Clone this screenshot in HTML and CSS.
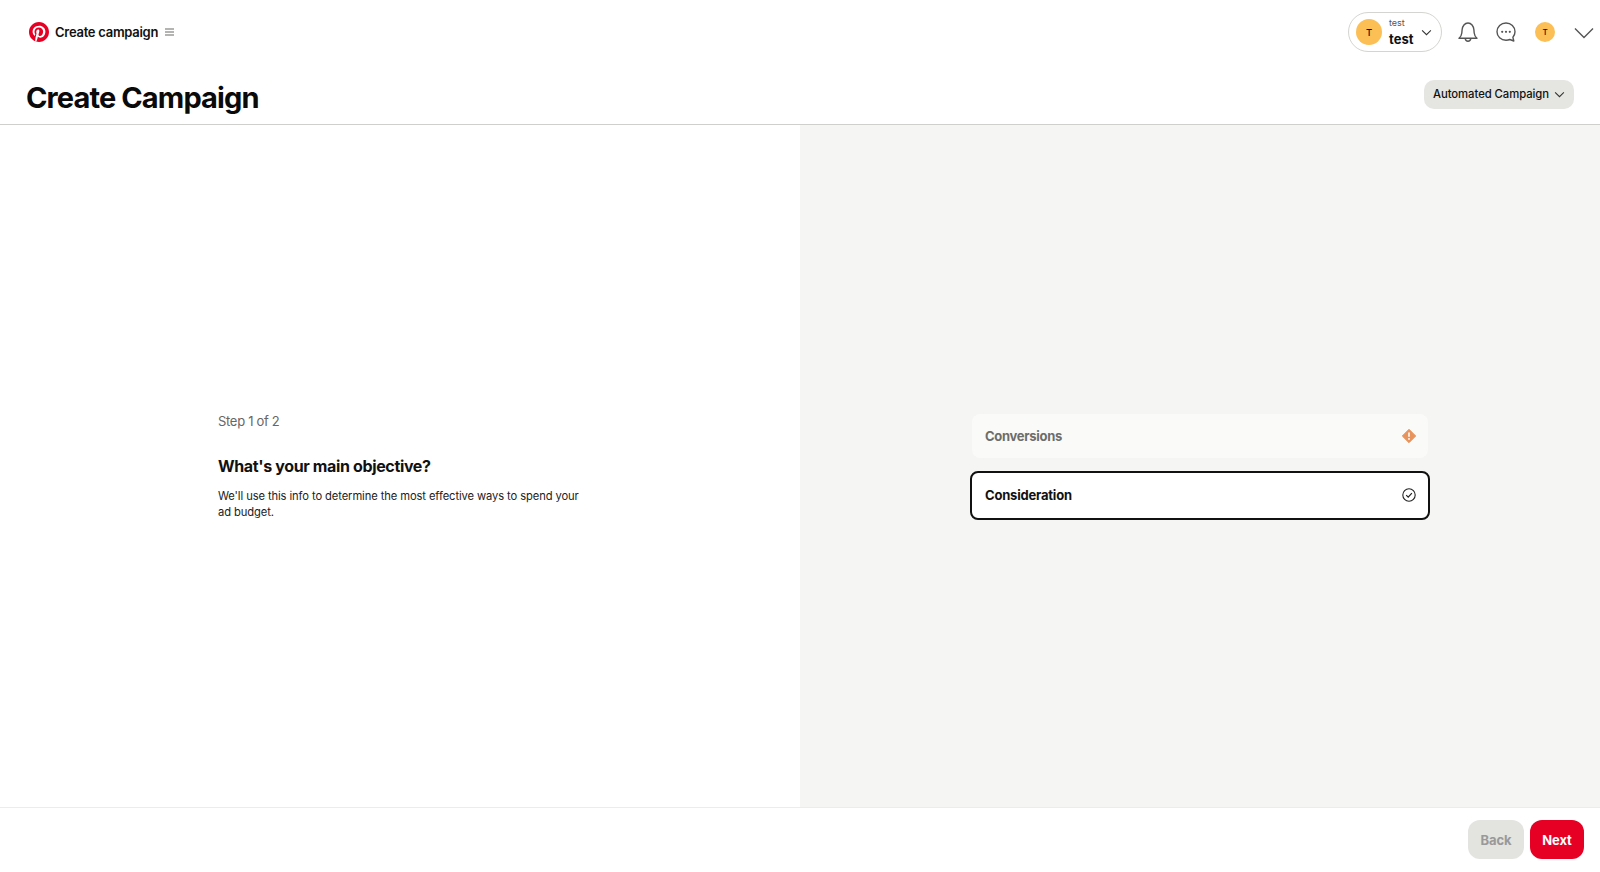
FILE: index.html
```html
<!DOCTYPE html>
<html lang="en">
<head>
<meta charset="utf-8">
<title>Create Campaign</title>
<link rel="stylesheet" href="styles.css">
</head>
<body>
<div class="page">
  <header class="topbar">
    <div class="brand">
      <svg class="logo" viewBox="0 0 24 24" width="20" height="20"><circle cx="12" cy="12" r="11" fill="#fff"/><path fill="#e60023" d="M12 0C5.373 0 0 5.372 0 12c0 5.084 3.163 9.426 7.627 11.174-.105-.949-.2-2.405.042-3.441.218-.937 1.407-5.965 1.407-5.965s-.359-.719-.359-1.782c0-1.668.967-2.914 2.171-2.914 1.023 0 1.518.769 1.518 1.69 0 1.029-.655 2.568-.994 3.995-.283 1.194.599 2.169 1.777 2.169 2.133 0 3.772-2.249 3.772-5.495 0-2.873-2.064-4.882-5.012-4.882-3.414 0-5.418 2.561-5.418 5.208 0 1.031.397 2.137.893 2.739a.36.36 0 0 1 .083.345l-.333 1.36c-.053.22-.174.267-.402.161-1.499-.698-2.436-2.889-2.436-4.649 0-3.785 2.75-7.262 7.929-7.262 4.163 0 7.398 2.967 7.398 6.931 0 4.136-2.607 7.464-6.227 7.464-1.216 0-2.359-.631-2.75-1.378l-.748 2.853c-.271 1.043-1.002 2.35-1.492 3.146C9.57 23.812 10.763 24 12 24c6.627 0 12-5.373 12-12S18.627 0 12 0z"/></svg>
      <span class="brand-name">Create campaign</span>
      <svg class="menu" viewBox="0 0 9 8" width="9" height="8"><path d="M0 1h9M0 4h9M0 7h9" stroke="#6b6b68" stroke-width="1.200" fill="none"/></svg>
    </div>
    <div class="actions">
      <div class="account">
        <span class="avatar avatar-lg">T</span>
        <span class="account-text"><span class="account-type">test</span><span class="account-name">test</span></span>
        <svg viewBox="0 0 12 8" width="11" height="7"><path d="M1 1.500l5 5 5-5" stroke="#333" stroke-width="1.200" fill="none"/></svg>
      </div>
      <svg class="bell" viewBox="0 0 22 22" width="22" height="22"><path d="M2 17.200h18c-1.800-1.400-2.600-3-2.800-5.200l-.3-3.200C16.600 5.200 14.300 2 11 2S5.400 5.200 5.100 8.800L4.800 12c-.2 2.200-1 3.800-2.800 5.200zM8.200 17.400c.2 1.700 1.300 2.800 2.800 2.800s2.600-1.100 2.800-2.800" stroke="#555" stroke-width="1.400" fill="none" stroke-linejoin="round"/></svg>
      <svg class="chat" viewBox="0 0 22 22" width="22" height="22"><path d="M11 2c-5 0-9 3.800-9 8.700 0 4.800 4 8.500 9 8.500 1.300 0 2.700-.2 3.800-.7l4 1.500-.9-3.700c1.300-1.500 2.100-3.400 2.100-5.600C20 5.800 16 2 11 2z" stroke="#555" stroke-width="1.400" fill="none" stroke-linejoin="round"/><circle cx="7.200" cy="10.800" r="1.100" fill="#555"/><circle cx="11" cy="10.800" r="1.100" fill="#555"/><circle cx="14.800" cy="10.800" r="1.100" fill="#555"/></svg>
      <span class="avatar avatar-sm">T</span>
      <svg class="caret" viewBox="0 0 20 12" width="20" height="12"><path d="M1 1.500l9 9 9-9" stroke="#555" stroke-width="1.400" fill="none"/></svg>
    </div>
  </header>
  <div class="titlebar">
    <h1 class="title">Create Campaign</h1>
    <button class="type-btn" type="button">Automated Campaign
      <svg viewBox="0 0 12 8" width="11" height="7"><path d="M1 1.500l5 5 5-5" stroke="#333" stroke-width="1.200" fill="none"/></svg>
    </button>
  </div>
  <main class="split">
    <section class="intro">
      <p class="step">Step 1 of 2</p>
      <h2 class="question">What's your main objective?</h2>
      <p class="desc">We'll use this info to determine the most effective ways to spend your ad budget.</p>
    </section>
    <section class="choices">
      <div class="option option-disabled">
        <span>Conversions</span>
        <svg viewBox="0 0 14 14" width="14" height="14"><path d="M7 .3l6.700 6.700L7 13.700.3 7z" fill="#e8935c" stroke="#e8935c" stroke-linejoin="round"/><path d="M7 3.500v4.200" stroke="#fff" stroke-width="1.600"/><circle cx="7" cy="9.900" r=".9" fill="#fff"/></svg>
      </div>
      <div class="option option-selected">
        <span>Consideration</span>
        <svg viewBox="0 0 14 14" width="14" height="14"><circle cx="7" cy="7" r="6.200" stroke="#222" stroke-width="1.100" fill="none"/><path d="M4.200 7.200l2 2 3.700-4" stroke="#222" stroke-width="1.200" fill="none"/></svg>
      </div>
    </section>
  </main>
  <footer class="footer">
    <button class="btn btn-back" type="button">Back</button>
    <button class="btn btn-next" type="button">Next</button>
  </footer>
</div>
</body>
</html>
```
FILE: styles.css
```css
* { box-sizing: border-box; }
html, body { margin: 0; height: 100%; }
body { font-family: Inter, "Liberation Sans", sans-serif; color: #111; background: #fff; }
.page { height: 872px; display: flex; flex-direction: column; overflow: hidden; }

.topbar { height: 64px; flex: none; display: flex; align-items: center; justify-content: space-between; padding: 0 6px 0 29px; }
.brand { display: flex; align-items: center; }
.logo { display: block; margin-right: 6px; }
.brand-name { font-size: 13px; font-weight: 600; letter-spacing: -.27px; margin-right: 7px; }
.menu { display: block; }

.actions { display: flex; align-items: center; }
.account { width: 94px; height: 40px; border: 1px solid #d4d4d0; border-radius: 20px; display: flex; align-items: center; padding: 0 9px 0 7px; }
.avatar { border-radius: 50%; background: #fbbf55; display: flex; align-items: center; justify-content: center; font-weight: 500; flex: none; }
.avatar-lg { width: 26px; height: 26px; font-size: 9.500px; }
.avatar-sm { width: 20px; height: 20px; font-size: 8px; margin-left: 18px; }
.account-text { display: flex; flex-direction: column; margin-left: 7px; flex: 1; }
.account-type { font-size: 9px; line-height: 14px; color: #555; }
.account-name { font-size: 13px; line-height: 19px; font-weight: 700; }
.bell { margin-left: 15px; display: block; }
.chat { margin-left: 16px; display: block; }
.caret { margin-left: 19px; margin-top: 2px; display: block; }

.titlebar { height: 61px; flex: none; display: flex; align-items: flex-start; justify-content: space-between; padding: 16px 26px 0; border-bottom: 1px solid #cfcfcb; }
.title { margin: 1px 0 0; font-size: 29px; line-height: 34px; font-weight: 700; letter-spacing: -.88px; color: #0a0a0a; }
.type-btn { width: 150px; height: 29px; border: 0; border-radius: 10px; background: #e5e5e1; font: 500 11.300px/27px Inter, "Liberation Sans", sans-serif; letter-spacing: -.06px; color: #111; display: flex; align-items: center; justify-content: center; gap: 5px; padding: 0 0 1px; white-space: nowrap; }

.split { flex: 1; display: grid; grid-template-columns: 1fr 1fr; min-height: 0; }
.intro { display: flex; flex-direction: column; justify-content: center; padding: 0 0 1px 218px; }
.step { margin: 0 0 25px; font-size: 13px; line-height: 18px; letter-spacing: -.3px; color: #666; }
.question { margin: 0 0 11px; font-size: 16px; line-height: 22px; font-weight: 700; letter-spacing: -.36px; }
.desc { margin: 0; width: 365px; font-size: 11.200px; line-height: 16px; letter-spacing: -.1px; color: #222; }

.choices { background: #f5f5f3; display: flex; flex-direction: column; align-items: center; justify-content: center; padding-top: 1px; }
.option { display: flex; align-items: center; justify-content: space-between; font-size: 13px; font-weight: 700; letter-spacing: -.2px; border-radius: 8px; }
.option-disabled { width: 456px; height: 44px; background: #fafaf9; color: #6d6d6a; padding: 0 12px 0 13px; margin-bottom: 12px; letter-spacing: -.3px; }
.option-selected { width: 460px; height: 49px; margin-top: 1px; background: #fff; border: 2px solid #111; padding: 0 12px 0 13px; color: #111; }

.footer { height: 65px; flex: none; border-top: 1px solid #ececea; display: flex; align-items: flex-start; justify-content: flex-end; gap: 6px; padding: 12px 16px 0 0; }
.btn { height: 39px; border: 0; border-radius: 12px; font: 700 13px Inter, "Liberation Sans", sans-serif; letter-spacing: -.1px; padding: 0; }
.btn-back { width: 56px; background: #e3e3df; color: #999; }
.btn-next { width: 54px; background: #e60023; color: #fff; }
```
